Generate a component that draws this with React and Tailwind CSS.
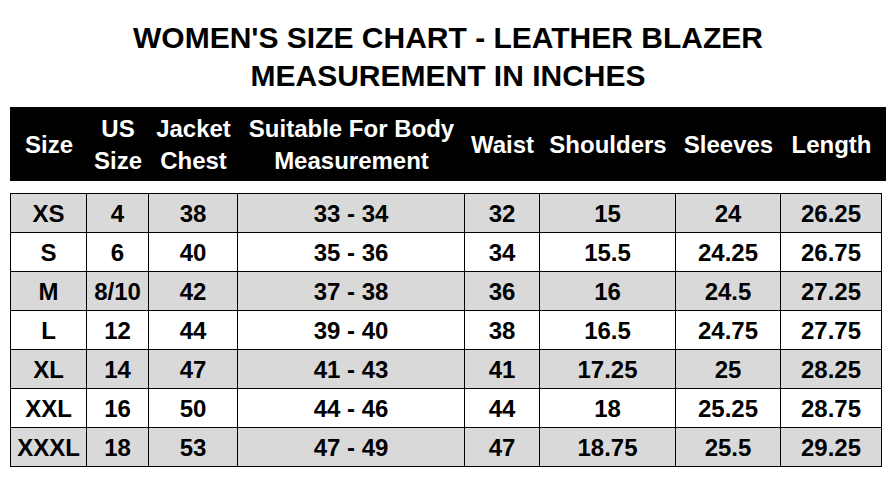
const cols = "grid grid-cols-[76px_62px_89px_227px_75px_136px_105px_101px]";

const headers = [
  ["Size"],
  ["US", "Size"],
  ["Jacket", "Chest"],
  ["Suitable For Body", "Measurement"],
  ["Waist"],
  ["Shoulders"],
  ["Sleeves"],
  ["Length"],
];

const rows = [
  ["XS", "4", "38", "33 - 34", "32", "15", "24", "26.25"],
  ["S", "6", "40", "35 - 36", "34", "15.5", "24.25", "26.75"],
  ["M", "8/10", "42", "37 - 38", "36", "16", "24.5", "27.25"],
  ["L", "12", "44", "39 - 40", "38", "16.5", "24.75", "27.75"],
  ["XL", "14", "47", "41 - 43", "41", "17.25", "25", "28.25"],
  ["XXL", "16", "50", "44 - 46", "44", "18", "25.25", "28.75"],
  ["XXXL", "18", "53", "47 - 49", "47", "18.75", "25.5", "29.25"],
];

export default function App() {
  return (
    <div className="w-[896px] h-[482px] bg-white px-[10px] pt-[19px] font-['Liberation_Sans',Arial,sans-serif] font-bold text-black">
      <h1 className="text-center text-[30px] leading-[38px] font-bold">
        WOMEN'S SIZE CHART - LEATHER BLAZER
        <br />
        MEASUREMENT IN INCHES
      </h1>

      <div className={`${cols} mt-[12px] h-[74px] bg-black text-white text-[24px] leading-[32px]`}>
        {headers.map((h, i) => (
          <div key={i} className="flex flex-col items-center justify-center text-center whitespace-nowrap pl-[2px] pt-[1px]">
            {h.map((line) => (
              <span key={line}>{line}</span>
            ))}
          </div>
        ))}
      </div>

      <div className="mt-[12px] w-[872px] border-l border-t border-black">
        {rows.map((r, ri) => (
          <div key={ri} className={`${cols} ${ri % 2 === 0 ? "bg-[#d9d9d9]" : "bg-white"}`}>
            {r.map((v, ci) => (
              <div
                key={ci}
                className="h-[39px] flex items-center justify-center border-r border-b border-black text-[24px] leading-none pt-[1px]"
              >
                {v}
              </div>
            ))}
          </div>
        ))}
      </div>
    </div>
  );
}
